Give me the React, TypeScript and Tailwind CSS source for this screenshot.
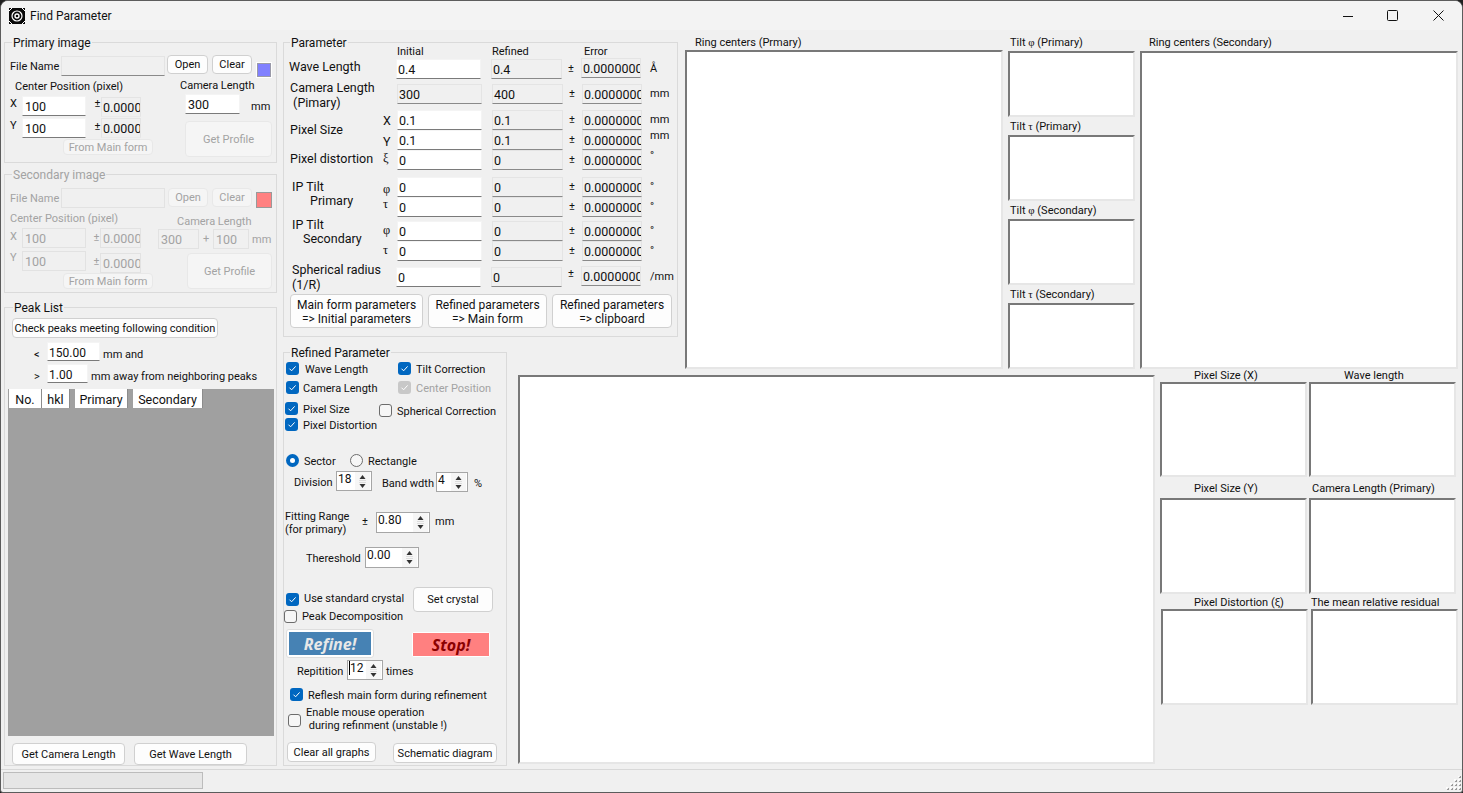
import React from 'react'

const edit = 'bg-white border border-[#f4f4f4] border-b-[#7a7a7a]'
const readonly = 'bg-[#f0f0f0] border border-[#e4e4e4] border-b-[#8a8a8a]'
const dimBox = 'bg-[#f0f0f0] border border-[#e2e2e2]'

function Box({ value, className = '' }: { value?: string; className?: string }) {
  return (
    <div className={`shrink-0 overflow-hidden whitespace-nowrap pl-[1px] text-[12.5px] leading-[20px] ${className}`}>
      {value}
    </div>
  )
}

function Btn({ children, disabled, className = '' }: { children: React.ReactNode; disabled?: boolean; className?: string }) {
  return (
    <div
      className={`flex shrink-0 items-center justify-center rounded-[4px] border pt-[2px] text-center whitespace-nowrap ${
        disabled ? 'border-[#e8e8e8] bg-[#f5f5f5] text-[#a3a3a3]' : 'border-[#d0d0d0] bg-[#fdfdfd]'
      } ${className}`}
    >
      {children}
    </div>
  )
}

function Check({ state = 'on', className = '' }: { state?: 'on' | 'off' | 'dim'; className?: string }) {
  if (state === 'off') {
    return <span className={`block h-[13px] w-[13px] shrink-0 rounded-[3px] border border-[#6c6c6c] bg-[#f6f6f6] ${className}`} />
  }
  return (
    <span className={`flex h-[13px] w-[13px] shrink-0 items-center justify-center rounded-[3px] ${state === 'on' ? 'bg-[#0067c0]' : 'bg-[#c8c8c8]'} ${className}`}>
      <svg width="9" height="9" viewBox="0 0 9 9" fill="none" stroke="#fff" strokeWidth="1">
        <path d="M1.5 4.7 3.6 6.8 7.6 2.4" />
      </svg>
    </span>
  )
}

// text beside a check box, pushed down a pixel so it sits on the box's centre
function Label({ children, className = '' }: { children: React.ReactNode; className?: string }) {
  return <span className={`pt-[2px] leading-[13px] whitespace-nowrap ${className}`}>{children}</span>
}

function Spinner({ value, caret, className = '' }: { value: string; caret?: boolean; className?: string }) {
  return (
    <div className={`flex shrink-0 justify-between border border-[#a6a6a6] bg-white ${className}`}>
      <span className="flex h-[15px] pl-[1px] text-[12px] leading-[15px]">
        {caret && <span className="h-[14px] w-px bg-black" />}
        {value}
      </span>
      <span className="mr-[1px] flex w-[15px] flex-col items-center justify-center gap-[1px] bg-[#f6f6f6]">
        <svg width="7" height="7" viewBox="0 0 7 7"><path d="M3.5 1 6.5 5h-6z" fill="#333" /><path d="M0 6.5h7" stroke="#ddd" /></svg>
        <svg width="7" height="7" viewBox="0 0 7 7"><path d="M3.5 6 6.5 2h-6z" fill="#333" /><path d="M0 .5h7" stroke="#ddd" /></svg>
      </span>
    </div>
  )
}

function Group({ title, dim, legend = 'ml-[7px]', className = '', children }: { title: string; dim?: boolean; legend?: string; className?: string; children: React.ReactNode }) {
  return (
    <fieldset className={`shrink-0 border border-[#dadada] ${className}`}>
      <legend className={`h-[16px] px-[1px] text-[12px] leading-[18px] ${legend} ${dim ? 'text-[#a3a3a3]' : ''}`}>{title}</legend>
      {children}
    </fieldset>
  )
}

function Plot({ className = '' }: { className?: string }) {
  return <div className={`shrink-0 border-2 border-[#e6e6e6] border-t-[#787878] border-l-[#787878] bg-white ${className}`} />
}

function Serif({ children, className = '' }: { children: React.ReactNode; className?: string }) {
  return <span className={`font-['Liberation_Serif',serif] ${className}`}>{children}</span>
}

function PrimaryImage() {
  return (
    <Group title="Primary image" className="h-[129px] w-[273px]">
      <div className="mt-[5px] flex h-[21px] items-start">
        <span className="ml-[5px] mt-[3px] w-[51px] whitespace-nowrap leading-[18px]">File Name</span>
        <Box className={`mt-[1px] h-[20px] w-[104px] ${readonly}`} />
        <Btn className="ml-[2px] h-[19px] w-[41px]">Open</Btn>
        <Btn className="ml-[4px] h-[19px] w-[40px]">Clear</Btn>
        <span className="ml-[4px] mt-[7px] h-[16px] w-[16px] border border-white bg-[#8080ff] outline outline-1 -outline-offset-2 outline-[#9a9aa8]" />
      </div>
      <div className="flex">
        <div className="w-[170px]">
          <div className="ml-[10px] mt-[2px] h-[18px] whitespace-nowrap leading-[18px]">Center Position (pixel)</div>
          <div className="flex h-[22px]">
            <span className="ml-[5px] w-[12px] text-[11px] leading-[16px]">X</span>
            <Box value="100" className={`h-[20px] w-[64px] !pl-[2px] ${edit}`} />
            <span className="ml-[8px] w-[7px] text-center leading-[16px]">±</span>
            <Box value="0.00000" className={`mt-[1px] h-[20px] w-[40px] ${readonly} border-b-[#eaeaea]`} />
          </div>
          <div className="flex h-[21px]">
            <span className="ml-[5px] w-[12px] text-[11px] leading-[16px]">Y</span>
            <Box value="100" className={`h-[20px] w-[64px] !pl-[2px] ${edit}`} />
            <span className="ml-[8px] w-[7px] text-center leading-[18px]">±</span>
            <Box value="0.00000" className={`h-[20px] w-[40px] ${readonly} border-b-[#eaeaea]`} />
          </div>
          <Btn disabled className="ml-[58px] h-[16px] w-[90px]">From Main form</Btn>
        </div>
        <div>
          <div className="ml-[5px] mt-[1px] h-[17px] whitespace-nowrap leading-[17px]">Camera Length</div>
          <div className="flex h-[20px]">
            <Box value="300" className={`ml-[10px] h-[20px] w-[55px] !pl-[2px] ${edit}`} />
            <span className="ml-[11px] mt-[4px] text-[11px] leading-[18px]">mm</span>
          </div>
          <Btn disabled className="ml-[10px] mt-[7px] h-[36px] w-[87px]">Get Profile</Btn>
        </div>
      </div>
    </Group>
  )
}

function SecondaryImage() {
  return (
    <Group dim title="Secondary image" className="mt-[3px] h-[127px] w-[273px] text-[#a3a3a3]">
      <div className="mt-[6px] flex h-[20px] items-start">
        <span className="ml-[5px] mt-[2px] w-[51px] whitespace-nowrap leading-[18px]">File Name</span>
        <Box className={`h-[20px] w-[104px] ${dimBox}`} />
        <Btn disabled className="ml-[3px] h-[19px] w-[40px]">Open</Btn>
        <Btn disabled className="ml-[4px] h-[19px] w-[40px]">Clear</Btn>
        <span className="ml-[4px] mt-[4px] h-[16px] w-[16px] border border-[#999] bg-[#ff8080]" />
      </div>
      <div className="flex">
        <div className="w-[153px]">
          <div className="ml-[5px] mt-[2px] h-[18px] whitespace-nowrap leading-[18px]">Center Position (pixel)</div>
          <div className="flex h-[23px]">
            <span className="ml-[5px] w-[12px] text-[11px] leading-[18px]">X</span>
            <Box value="100" className={`h-[20px] w-[64px] !pl-[2px] ${dimBox}`} />
            <span className="ml-[7px] w-[7px] text-center leading-[20px]">±</span>
            <Box value="0.00000" className={`h-[20px] w-[41px] !pl-[2px] ${dimBox}`} />
          </div>
          <div className="flex h-[22px]">
            <span className="ml-[5px] w-[12px] text-[11px] leading-[14px]">Y</span>
            <Box value="100" className={`h-[20px] w-[64px] !pl-[2px] ${dimBox}`} />
            <span className="ml-[7px] w-[7px] text-center leading-[22px]">±</span>
            <Box value="0.00000" className={`mt-[2px] h-[20px] w-[41px] !pl-[2px] ${dimBox}`} />
          </div>
          <Btn disabled className="ml-[58px] h-[16px] w-[90px]">From Main form</Btn>
        </div>
        <div>
          <div className="ml-[19px] mt-[5px] h-[16px] whitespace-nowrap leading-[18px]">Camera Length</div>
          <div className="flex">
            <Box value="300" className={`h-[20px] w-[41px] !pl-[2px] ${dimBox}`} />
            <span className="w-[14px] text-center leading-[20px]">+</span>
            <Box value="100" className={`h-[20px] w-[36px] !pl-[2px] ${dimBox}`} />
            <span className="ml-[3px] mt-[2px] text-[11px] leading-[18px]">mm</span>
          </div>
          <Btn disabled className="ml-[29px] mt-[4px] h-[36px] w-[85px]">Get Profile</Btn>
        </div>
      </div>
    </Group>
  )
}

function PeakList() {
  const cells = [
    ['No.', 'w-[33px]'],
    ['hkl', 'w-[28px]'],
    ['Primary', 'ml-[5px] w-[53px]'],
    ['Secondary', 'ml-[5px] w-[70px]'],
  ]
  return (
    <Group title="Peak List" legend="ml-[8px]" className="mt-[6px] h-[467px] w-[273px]">
      <Btn className="ml-[7px] mt-[3px] h-[20px] w-[206px]">Check peaks meeting following condition</Btn>
      <div className="mt-[4px] flex h-[19px]">
        <span className="ml-[29px] w-[13px] leading-[26px]">&lt;</span>
        <Box value="150.00" className={`h-[19px] w-[53px] !text-[12px] ${edit}`} />
        <span className="ml-[3px] leading-[26px]">mm and</span>
      </div>
      <div className="mt-[3px] flex h-[19px]">
        <span className="ml-[29px] w-[13px] leading-[26px]">&gt;</span>
        <Box value="1.00" className={`h-[19px] w-[41px] !text-[12px] ${edit}`} />
        <span className="ml-[3px] whitespace-nowrap leading-[26px]">mm away from neighboring peaks</span>
      </div>
      <div className="ml-[3px] mt-[6px] h-[347px] w-[266px] bg-[#a0a0a0]">
        <div className="flex h-[19px] pl-[1px]">
          {cells.map(([t, w]) => (
            <div key={t} className={`border-r border-[#8c8c8c] bg-white text-center text-[12.5px] leading-[22px] ${w}`}>{t}</div>
          ))}
        </div>
      </div>
      <div className="mt-[7px] flex">
        <Btn className="ml-[7px] h-[22px] w-[113px]">Get Camera Length</Btn>
        <Btn className="ml-[9px] h-[22px] w-[113px]">Get Wave Length</Btn>
      </div>
    </Group>
  )
}

type ParamRow = {
  label?: React.ReactNode
  span?: string
  sym?: React.ReactNode
  a: string
  b: string
  unit: string
  unitCls?: string
  grayA?: boolean
  out?: boolean
}

const paramRows: ParamRow[] = [
  { label: <div className="ml-[5px] text-[12.5px] leading-[16px]">Wave Length</div>, a: '0.4', b: '0.4', unit: 'Å', unitCls: 'mt-[3px]', out: true },
  { label: <div className="ml-[6px] -mt-[4px] text-[12.5px] leading-[15px]">Camera Length<br />&nbsp;(Pimary)</div>, a: '300', b: '400', unit: 'mm', unitCls: 'mt-[3px]', grayA: true },
  { label: <div className="ml-[6px] mt-[12px] text-[12.5px] leading-[16px]">Pixel Size</div>, span: 'row-span-2', sym: <span className="leading-[21px]">X</span>, a: '0.1', b: '0.1', unit: 'mm', unitCls: 'mt-[3px]' },
  { sym: <span className="leading-[23px]">Y</span>, a: '0.1', b: '0.1', unit: 'mm', unitCls: '-mt-[1px]' },
  { label: <div className="ml-[6px] mt-[1px] text-[12.5px] leading-[16px]">Pixel distortion</div>, sym: <Serif className="leading-[16px]">ξ</Serif>, a: '0', b: '0', unit: '°', unitCls: '-mt-[1px]' },
  { label: <div className="ml-[8px] mt-[3px] text-[12.5px] leading-[14px]">IP Tilt<br /><span className="ml-[18px]">Primary</span></div>, span: 'row-span-2', sym: <Serif className="leading-[24px]">φ</Serif>, a: '0', b: '0', unit: '°', unitCls: 'mt-[3px]' },
  { sym: <Serif className="leading-[14px]">τ</Serif>, a: '0', b: '0', unit: '°', unitCls: 'mt-[3px]' },
  { label: <div className="ml-[8px] -mt-[3px] text-[12.5px] leading-[14px]">IP Tilt<br /><span className="ml-[11px]">Secondary</span></div>, span: 'row-span-2', sym: <Serif className="leading-[18px]">φ</Serif>, a: '0', b: '0', unit: '°', unitCls: 'mt-[3px]' },
  { sym: <Serif className="leading-[18px]">τ</Serif>, a: '0', b: '0', unit: '°', unitCls: 'mt-[3px]' },
  { label: <div className="ml-[8px] -mt-[5px] whitespace-nowrap text-[12.5px] leading-[15px]">Spherical radius<br />(1/R)</div>, a: '0', b: '0', unit: '/mm', unitCls: 'mt-[3px] text-[10.5px]', out: true },
]

function Parameter() {
  return (
    <Group title="Parameter" legend="ml-[6px]" className="h-[303px] w-[395px]">
      <div className="-mt-[5px] flex h-[14px] leading-[14px]">
        <span className="ml-[113px] w-[95px]">Initial</span>
        <span className="w-[92px]">Refined</span>
        <span>Error</span>
      </div>
      <div className="grid grid-cols-[99px_13px_95px_77px_13px_69px_auto] grid-rows-[25px_26px_20px_20px_27px_20px_24px_20px_26px_20px]">
        {paramRows.map((r, i) => {
          const nudge = r.out ? '' : 'ml-[1px]'
          return (
            <React.Fragment key={i}>
              {r.label && <div className={r.span ?? ''}>{r.label}</div>}
              <div className="flex items-start text-[12.5px]">{r.sym}</div>
              <Box value={r.a} className={`h-[20px] w-[85px] ${nudge} ${r.grayA ? readonly : edit}`} />
              <Box value={r.b} className={`h-[20px] w-[71px] ${nudge} ${readonly}`} />
              <span className={`${i === 9 ? 'leading-[14px]' : 'leading-[20px]'} ${nudge}`}>±</span>
              <Box value="0.0000000" className={`h-[20px] w-[60px] ${nudge} ${r.out ? '-mt-[1px]' : ''} ${readonly}`} />
              <span className={`h-[14px] whitespace-nowrap text-[11px] leading-[14px] ${r.unitCls ?? ''}`}>{r.unit}</span>
            </React.Fragment>
          )
        })}
      </div>
      <div className="mt-[7px] flex text-[12px] leading-[14px]">
        <Btn className="ml-[6px] h-[34px] w-[133px]">Main form parameters<br />=&gt; Initial parameters</Btn>
        <Btn className="ml-[5px] h-[34px] w-[119px]">Refined parameters<br />=&gt; Main form</Btn>
        <Btn className="ml-[5px] h-[34px] w-[120px]">Refined parameters<br />=&gt; clipboard</Btn>
      </div>
    </Group>
  )
}

function Refined() {
  return (
    <Group title="Refined Parameter" legend="ml-[6px]" className="-mt-[1px] h-[422px] w-[224px]">
      <div className="mt-[2px] flex h-[13px] items-center">
        <Check className="ml-[2px]" />
        <Label className="ml-[6px] w-[93px]">Wave Length</Label>
        <Check />
        <Label className="ml-[5px]">Tilt Correction</Label>
      </div>
      <div className="mt-[6px] flex h-[13px] items-center">
        <Check className="ml-[2px]" />
        <Label className="ml-[4px] w-[95px]">Camera Length</Label>
        <Check state="dim" />
        <Label className="ml-[5px] text-[#a3a3a3]">Center Position</Label>
      </div>
      <div className="mt-[8px] flex">
        <div className="w-[95px]">
          <div className="flex h-[13px] items-center">
            <Check className="ml-[1px]" />
            <Label className="ml-[5px]">Pixel Size</Label>
          </div>
          <div className="mt-[3px] flex h-[13px] items-center">
            <Check className="ml-[1px]" />
            <Label className="ml-[5px]">Pixel Distortion</Label>
          </div>
        </div>
        <div className="mt-[2px] flex h-[13px] items-center">
          <Check state="off" />
          <Label className="ml-[5px]">Spherical Correction</Label>
        </div>
      </div>
      <div className="mt-[23px] flex h-[13px] items-center">
        <span className="ml-[2px] flex h-[13px] w-[13px] items-center justify-center rounded-full bg-[#0067c0]">
          <span className="h-[5px] w-[5px] rounded-full bg-white" />
        </span>
        <Label className="ml-[5px] w-[46px]">Sector</Label>
        <span className="h-[13px] w-[13px] rounded-full border border-[#6c6c6c] bg-[#f6f6f6]" />
        <Label className="ml-[5px]">Rectangle</Label>
      </div>
      <div className="mt-[4px] flex h-[21px] items-start leading-[24px]">
        <span className="ml-[10px] w-[42px]">Division</span>
        <Spinner value="18" className="h-[20px] w-[36px]" />
        <span className="ml-[10px] mt-[1px] w-[54px] whitespace-nowrap">Band wdth</span>
        <Spinner value="4" className="mt-[1px] h-[20px] w-[32px]" />
        <span className="ml-[6px] mt-[1px]">%</span>
      </div>
      <div className="mt-[20px] flex h-[21px] items-center">
        <span className="ml-[1px] w-[77px] whitespace-nowrap leading-[13px]">Fitting Range<br />(for primary)</span>
        <span className="w-[14px]">±</span>
        <Spinner value="0.80" className="h-[21px] w-[54px]" />
        <span className="ml-[5px]">mm</span>
      </div>
      <div className="mt-[14px] flex h-[21px] items-center">
        <span className="ml-[22px] w-[59px] pt-[3px]">Thereshold</span>
        <Spinner value="0.00" className="h-[21px] w-[54px]" />
      </div>
      <div className="mt-[19px] flex h-[25px] items-center">
        <Check className="ml-[2px]" />
        <span className="ml-[5px] w-[109px] whitespace-nowrap">Use standard crystal</span>
        <Btn className="h-[25px] w-[80px]">Set crystal</Btn>
      </div>
      <div className="-mt-[2px] flex h-[13px] items-center leading-[13px]">
        <Check state="off" />
        <span className="ml-[5px] whitespace-nowrap">Peak Decomposition</span>
      </div>
      <div className="mt-[6px] flex h-[29px] items-start">
        <div className="ml-[2px] h-[29px] w-[88px] rounded-[3px] border border-[#dedede] bg-white p-[2px]">
          <div className="flex h-full items-center justify-center bg-[#4682b4] font-['Open_Sans',sans-serif] text-[16px] font-bold italic text-[#e8e8e8]">Refine!</div>
        </div>
        <div className="ml-[37px] mt-[2px] h-[27px] w-[80px] rounded-[3px] border border-[#f0f0f0] bg-white p-[1px]">
          <div className="flex h-full items-center justify-center bg-[#ff8080] font-['Open_Sans',sans-serif] text-[16px] font-bold italic text-[#8b0000]">Stop!</div>
        </div>
      </div>
      <div className="mt-[2px] flex h-[21px] items-start leading-[24px]">
        <span className="ml-[13px] w-[50px]">Repitition</span>
        <Spinner caret value="12" className="h-[20px] w-[36px]" />
        <span className="ml-[3px]">times</span>
      </div>
      <div className="mt-[7px] flex h-[13px] items-center">
        <Check className="ml-[6px]" />
        <Label className="ml-[5px]">Reflesh main form during refinement</Label>
      </div>
      <div className="mt-[4px] flex h-[27px] items-center leading-[13px]">
        <Check state="off" className="ml-[4px] mt-[3px]" />
        <span className="ml-[5px] whitespace-pre">Enable mouse operation{'\n'} during refinment (unstable !)</span>
      </div>
      <div className="mt-[10px] flex items-start">
        <Btn className="ml-[3px] h-[20px] w-[89px]">Clear all graphs</Btn>
        <Btn className="ml-[17px] mt-[1px] h-[20px] w-[104px]">Schematic diagram</Btn>
      </div>
    </Group>
  )
}

function TiltPlots() {
  const titles = ['φ (Primary)', 'τ (Primary)', 'φ (Secondary)', 'τ (Secondary)']
  return (
    <div className="ml-[4px] mt-[3px] w-[128px] shrink-0">
      {titles.map((t) => (
        <div key={t}>
          <div className="ml-[3px] h-[18px] leading-[18px]">
            Tilt <Serif>{t.slice(0, 1)}</Serif>{t.slice(1)}
          </div>
          <Plot className="ml-[1px] h-[66px] w-[127px]" />
        </div>
      ))}
    </div>
  )
}

function AppIcon() {
  return (
    <svg width="16" height="16" viewBox="0 0 16 16" className="ml-[8px] shrink-0">
      <rect width="16" height="16" fill="#0a0a0a" />
      <g fill="none" stroke="#fff">
        <circle cx="8" cy="8" r="2" strokeWidth="1.4" />
        <circle cx="8" cy="8" r="5" strokeWidth="1.2" />
        <path d="M0 3 3 0M13 0l3 3M0 13l3 3M16 13l-3 3" strokeWidth="1" />
      </g>
    </svg>
  )
}

function WindowButtons() {
  return (
    <div className="ml-auto flex items-center">
      <svg width="10" height="10" viewBox="0 0 10 10" className="mr-[34px]"><path d="M0 5.5h10" stroke="#111" /></svg>
      <svg width="11" height="11" viewBox="0 0 11 11" className="mr-[35px]"><rect x=".5" y=".5" width="10" height="10" rx="1" fill="none" stroke="#111" /></svg>
      <svg width="11" height="11" viewBox="0 0 11 11" className="mr-[18px]"><path d="M.5.5l10 10M10.5.5l-10 10" stroke="#111" /></svg>
    </div>
  )
}

function Grip() {
  const dots = [[14, 0], [14, 4], [10, 4], [14, 8], [10, 8], [6, 8], [14, 12], [10, 12], [6, 12], [2, 12]]
  return (
    <svg width="17" height="15" viewBox="0 0 17 15" className="mb-[1px] self-end">
      {dots.map(([x, y]) => (
        <React.Fragment key={`${x}-${y}`}>
          <rect x={x} y={y} width="2" height="2" fill="#9a9a9a" />
          <rect x={x - 1} y={y - 1} width="2" height="2" fill="#fff" opacity="0.85" />
        </React.Fragment>
      ))}
    </svg>
  )
}

export default function App() {
  return (
    <div className="h-[793px] w-[1463px] overflow-hidden bg-[#202020] font-['Roboto',sans-serif] text-[11px] text-[#111]">
      <div className="flex h-full flex-col overflow-hidden rounded-t-[8px] rounded-b-[3px] border border-[#5c5c5c] bg-[#f0f0f0]">
        <div className="flex h-[29px] shrink-0 items-center bg-[#f3f3f3]">
          <AppIcon />
          <span className="ml-[5px] text-[12px]">Find Parameter</span>
          <WindowButtons />
        </div>
        <div className="grid h-[739px] shrink-0 grid-cols-[282px_229px_170px_475px_305px] grid-rows-[315px_27px_397px]">
          <div className="row-span-3 flex flex-col pl-[3px] pt-[4px]">
            <PrimaryImage />
            <SecondaryImage />
            <PeakList />
          </div>
          <div className="col-span-2 pt-[4px]">
            <Parameter />
          </div>
          <div className="col-span-2 row-span-2 flex">
            <div className="ml-[3px] w-[318px] shrink-0">
              <div className="h-[20px] pl-[10px] pt-[5px] leading-[16px]">Ring centers (Prmary)</div>
              <Plot className="h-[319px] w-[318px]" />
            </div>
            <TiltPlots />
            <div className="ml-[5px] w-[318px] shrink-0">
              <div className="h-[21px] pl-[9px] pt-[5px] leading-[16px]">Ring centers (Secondary)</div>
              <Plot className="h-[318px] w-[318px]" />
            </div>
          </div>
          <div className="row-span-2">
            <Refined />
          </div>
          <div className="col-span-2">
            <Plot className="ml-[6px] mt-[3px] h-[389px] w-[637px]" />
          </div>
          <div className="-mt-[4px]">
            <div className="flex h-[14px] leading-[16px]">
              <span className="ml-[37px] w-[150px]">Pixel Size (X)</span>
              <span>Wave length</span>
            </div>
            <div className="flex gap-[2px]">
              <Plot className="ml-[3px] h-[95px] w-[147px]" />
              <Plot className="h-[95px] w-[147px]" />
            </div>
            <div className="flex h-[21px] leading-[23px]">
              <span className="ml-[37px] w-[118px]">Pixel Size (Y)</span>
              <span className="whitespace-nowrap">Camera Length (Primary)</span>
            </div>
            <div className="flex gap-[2px]">
              <Plot className="ml-[3px] h-[96px] w-[147px]" />
              <Plot className="h-[96px] w-[147px]" />
            </div>
            <div className="flex h-[15px] leading-[17px]">
              <span className="ml-[37px] w-[117px]">Pixel Distortion (ξ)</span>
              <span className="whitespace-nowrap">The mean relative residual</span>
            </div>
            <div className="flex gap-[3px]">
              <Plot className="ml-[4px] h-[96px] w-[147px]" />
              <Plot className="h-[96px] w-[147px]" />
            </div>
          </div>
        </div>
        <div className="flex h-[23px] shrink-0 justify-between border-t border-[#d8d8d8]">
          <div className="ml-[2px] mt-[2px] h-[17px] w-[200px] border border-[#bcbcbc] bg-[#e6e6e6]" />
          <Grip />
        </div>
      </div>
    </div>
  )
}
